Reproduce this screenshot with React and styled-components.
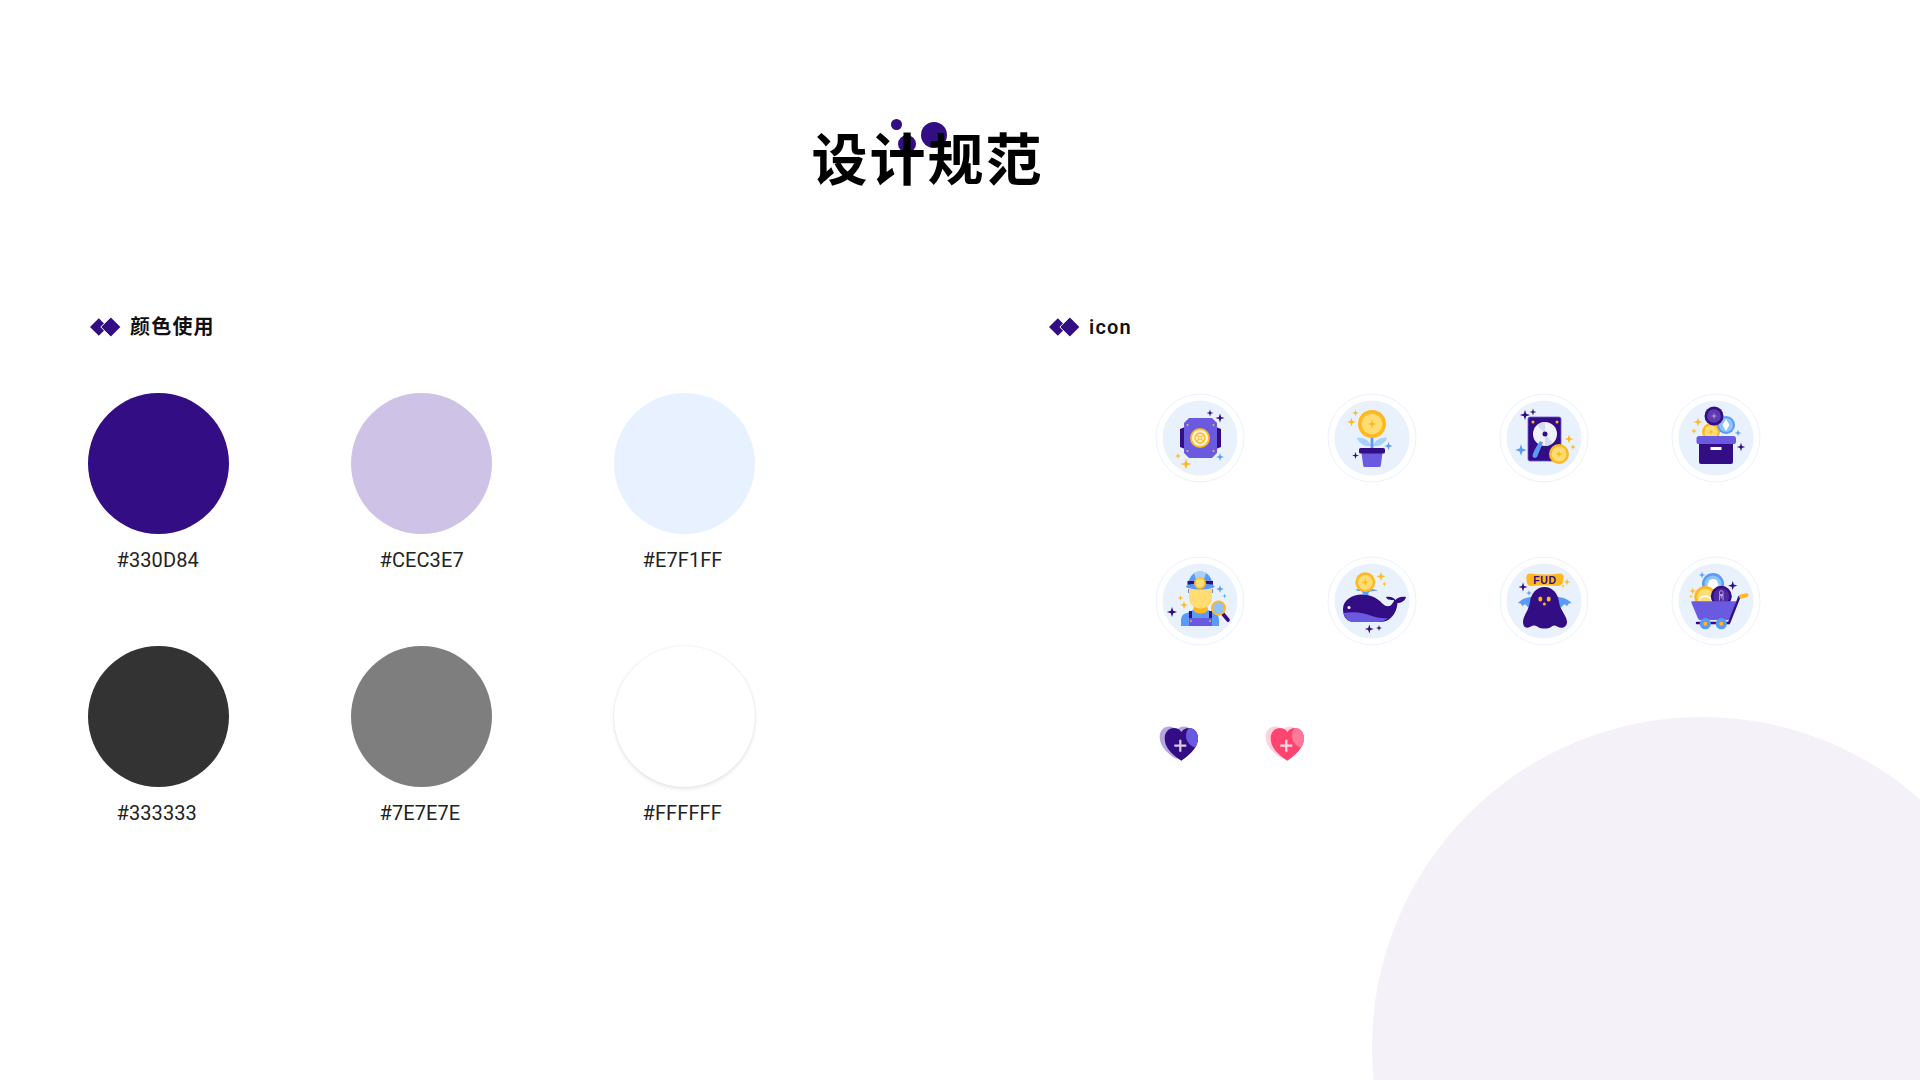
import React from "react";
import styled, { createGlobalStyle } from "styled-components";

const DARK = "#330D84", PURPLE = "#6A5ADF", BLUE = "#5B9BF7", SKY = "#A9D2FB", COINBLUE = "#8CC4FB", GOLD = "#FFB81F", PALE = "#FFDD73";

const Global = createGlobalStyle`
  html, body { margin: 0; padding: 0; background: #fff; }
  body { font-family: "Roboto", "Noto Sans CJK SC", sans-serif; }
`;

const Page = styled.div`
  position: relative; width: 1920px; height: 1080px; overflow: hidden; background: #fff;
`;
const Backdrop = styled.div`
  position: absolute; right: -112px; bottom: -297px; width: 660px; height: 660px;
  border-radius: 50%; background: #F4F1F9;
`;
const Header = styled.header`
  position: relative; height: 313px; box-sizing: border-box; padding: 116px 65px 0 0;
  display: flex; justify-content: center; align-items: flex-start;
`;
const Title = styled.h1`
  position: relative; margin: 0; color: #000;
  font: 700 56px/80px "Noto Sans CJK SC", sans-serif; letter-spacing: 2px;
`;
const TitleText = styled.span` position: relative; `;
const Dot = styled.i`
  position: absolute; left: ${p => p.$x}px; top: ${p => p.$y}px;
  width: ${p => p.$size}px; height: ${p => p.$size}px; border-radius: 50%; background: ${DARK};
`;
const Main = styled.main`
  position: relative; display: grid; grid-template-columns: 959px 1fr; padding-left: 89px;
`;
const Section = styled.section` display: flex; flex-direction: column; align-items: flex-start; `;
const Heading = styled.h2`
  margin: 0; height: 28px; display: flex; align-items: center; gap: 9px; color: #111;
  font: 600 20px/28px "Roboto", "Noto Sans CJK SC", sans-serif; letter-spacing: 1.2px;
`;
const Swatches = styled.div`
  margin: 52px 0 0 -1px; display: grid; grid-template-columns: repeat(3, 141px); column-gap: 122px; row-gap: 74px;
`;
const Swatch = styled.figure` margin: 0; display: flex; flex-direction: column; `;
const Disc = styled.div`
  width: 141px; height: 141px; border-radius: 50%; background: ${p => p.$color};
  box-shadow: ${p => p.$outlined ? "0 2px 4px rgba(0,0,0,.09), 0 0 2px rgba(0,0,0,.1)" : "none"};
`;
const Label = styled.figcaption`
  margin-top: 14px; padding-left: 28.5px; color: #222; font: 400 20px/24px "Roboto", sans-serif; letter-spacing: .1px;
`;
const IconGrid = styled.div`
  margin: 52px 0 0 107px; display: grid; grid-template-columns: repeat(4, 90px); column-gap: 82px; row-gap: 73px;
`;
const IconSvg = styled.svg` display: block; width: 90px; height: 90px; `;
const Hearts = styled.div` margin: 78px 0 0 110px; display: flex; gap: 62px; `;
const HeartSvg = styled.svg` display: block; width: 44px; height: 44px; `;
const BadgeText = styled.text`
  font: 700 10.5px "Liberation Sans", sans-serif; fill: ${DARK}; text-anchor: middle; letter-spacing: .7px;
`;

const Sparkle = ({ x, y, s: size, c }) => {
  const s = size * 1.15, k = s * 0.24;
  return (
    <path fill={c} d={`M${x},${y - s}L${x + k},${y - k}L${x + s},${y}L${x + k},${y + k}L${x},${y + s}L${x - k},${y + k}L${x - s},${y}L${x - k},${y - k}Z`} />
  );
};
const Coin = ({ x, y, r, inner = PALE, outer = GOLD, star = GOLD, s }) => (
  <g>
    <circle cx={x} cy={y} r={r} fill={outer} />
    <circle cx={x} cy={y} r={r * 0.74} fill={inner} />
    {star && <Sparkle x={x} y={y} s={s ?? r * 0.36} c={star} />}
  </g>
);
const Base = ({ children }) => (
  <IconSvg viewBox="-45 -45 90 90">
    <circle r="44" fill="#fff" stroke="#EBF2FD" strokeWidth="1" />
    <circle r="37.5" fill="#E9F1FD" />
    {children}
  </IconSvg>
);

const Miner = () => (
  <Base>
    <path fill={DARK} d="M-15,-11L-20,-9V9L-15,11ZM16,-11L21,-9V9L16,11Z" />
    <path fill={PURPLE} d="M-11,-20H12L17,-15V15L12,20H-11L-16,15V-15Z" />
    {[[-12.5, -13], [13.5, -13], [-12.5, 13], [13.5, 13]].map(([x, y]) => <circle key={x + "" + y} cx={x} cy={y} r="1" fill={GOLD} />)}
    <circle r="10" fill={GOLD} />
    <circle r="8" fill="#FFF6DC" />
    <circle r="5" fill="#FFF0C4" stroke={GOLD} strokeWidth="1.3" />
    <path stroke={GOLD} strokeWidth="1.1" d="M-3.4,-3.4L3.4,3.4M3.4,-3.4L-3.4,3.4" />
    <circle r="1.5" fill="#FFF6DC" stroke={GOLD} strokeWidth=".7" />
    <Sparkle x={20} y={-20} s={4} c={DARK} />
    <Sparkle x={10} y={-25} s={3} c={DARK} />
    <Sparkle x={20} y={19} s={3.4} c={BLUE} />
    <Sparkle x={-22} y={18} s={2.6} c={GOLD} />
    <Sparkle x={-14} y={26} s={4.8} c={GOLD} />
  </Base>
);
const Plant = () => (
  <Base>
    <path fill={SKY} d="M-1,8C-8,9 -13,5 -15,0C-8,-1 -3,2 -1,8ZM1,8C8,9 13,5 15,0C8,-1 3,2 1,8Z" />
    <rect x="-1.4" y="-2" width="2.8" height="13" fill={BLUE} />
    <Coin x={0} y={-14} r={14} s={4} />
    <path fill={PURPLE} d="M-10.5,15H10.5L8.8,27.5Q8.6,29 7,29H-7Q-8.6,29 -8.8,27.5Z" />
    <rect x="-13" y="10" width="26" height="5.6" rx="1.6" fill={DARK} />
    <Sparkle x={-20.5} y={-16} s={4} c={GOLD} />
    <Sparkle x={-16.5} y={-25} s={3} c={GOLD} />
    <Sparkle x={16.5} y={8} s={3.6} c={BLUE} />
    <Sparkle x={-16.5} y={17.5} s={3} c={DARK} />
  </Base>
);
const Drive = () => (
  <Base>
    <rect x="-16" y="-21" width="33" height="44" rx="2" fill={DARK} stroke={PURPLE} strokeWidth=".8" />
    <circle cx="1" cy="-4" r="12" fill="#F1F3FB" />
    <path fill="#D5DAF0" d="M1,-4L-7,-13A12,12 0 0 1 1,-16ZM1,-4L9,5A12,12 0 0 1 1,8Z" />
    <circle cx="1" cy="-4" r="2.5" fill={DARK} />
    <circle cx="-11" cy="-16" r="1.5" fill={GOLD} />
    <circle cx="13" cy="-16" r="1.5" fill={GOLD} />
    <path fill={BLUE} d="M-4,3L-1,4.5L-7,19Q-10,21 -11.5,18.5Q-12,15 -4,3Z" />
    <Coin x={15} y={16} r={10} s={3.2} />
    <Sparkle x={-19} y={-23} s={4.4} c={DARK} />
    <Sparkle x={-11} y={-26} s={3} c={DARK} />
    <Sparkle x={25} y={1} s={4} c={GOLD} />
    <Sparkle x={29} y={9} s={2.4} c={GOLD} />
    <Sparkle x={-23} y={12} s={5} c={BLUE} />
  </Base>
);
const Box = () => (
  <Base>
    <Coin x={-5} y={-6} r={9} s={2.6} />
    <circle cx="10" cy="-13" r="9" fill={BLUE} />
    <circle cx="10" cy="-13" r="7" fill={COINBLUE} />
    <path fill="#fff" d="M10,-19L13.5,-13L10,-7L6.5,-13Z" />
    <circle cx="-2" cy="-22" r="9.5" fill={DARK} />
    <circle cx="-2" cy="-22" r="6.8" fill="#5E3CB0" />
    <Sparkle x={-2} y={-22} s={2.8} c="#A893E0" />
    <rect x="-17" y="4" width="34" height="22" rx="2" fill={DARK} />
    <rect x="-19.5" y="-2" width="39.5" height="8" rx="2.6" fill={PURPLE} />
    <rect x="-5.5" y="9" width="11" height="3" rx=".6" fill="#fff" />
    <Sparkle x={-18} y={-16} s={4} c={GOLD} />
    <Sparkle x={-22} y={-7} s={2.5} c={GOLD} />
    <Sparkle x={22} y={-5} s={3} c={BLUE} />
    <Sparkle x={25} y={9} s={3.6} c={DARK} />
  </Base>
);
const Worker = () => (
  <Base>
    <path fill={DARK} d="M-11.5,-12H-9V-8H-11.5ZM10,-12H12.5V-8H10Z" />
    <path fill={BLUE} d="M-19,25V19Q-19,13 -13,12L-7,9H8L14,12Q19,13 19,19V25Z" />
    <ellipse cx="0.5" cy="8" rx="7.5" ry="4.6" fill={GOLD} />
    <path fill={PALE} d="M-11,-12H12V-3C12,4 6,7.5 .5,7.5C-5,7.5 -11,4 -11,-3Z" />
    <path fill={DARK} d="M-11,10H-8V18H-11ZM9,10H12V18H9Z" />
    <rect x="-11" y="17" width="23" height="8" fill={PURPLE} />
    <circle cx="-9" cy="20" r=".9" fill={GOLD} />
    <circle cx="10" cy="20" r=".9" fill={GOLD} />
    <path fill={BLUE} d="M-12.5,-13C-12.5,-23 -7,-29.5 0.3,-29.5C7.5,-29.5 13,-23 13,-13Z" />
    <path fill={SKY} d="M-6,-28Q0,-31.5 6,-28L4,-22H-4Z" />
    <rect x="-12.5" y="-20" width="25.5" height="3.6" fill={DARK} />
    <ellipse cx="0.3" cy="-14.5" rx="14.4" ry="2.9" fill={BLUE} />
    <Coin x={0} y={-18} r={6} star={null} />
    <path stroke={DARK} strokeWidth="3.6" strokeLinecap="round" d="M23,13L28,19" />
    <circle cx="18.5" cy="7" r="6.6" fill={COINBLUE} stroke={GOLD} strokeWidth="1.9" />
    <Sparkle x={20} y={-12} s={3.4} c={BLUE} />
    <Sparkle x={24.5} y={-5} s={2} c={BLUE} />
    <Sparkle x={-19.5} y={-3} s={2.4} c={GOLD} />
    <Sparkle x={-16} y={4} s={3.4} c={GOLD} />
    <Sparkle x={-28} y={11} s={4.4} c={DARK} />
  </Base>
);
const Whale = () => (
  <Base>
    <path fill={DARK} d="M-29,8C-29,-1 -20,-6.5 -10,-6.5C1,-6.5 7,-1 11,3C14,6 18,6 20,3C22,1 22,-1 22,-1C18,-1 15,-1 14,-4C19,-5 22,-3 23.5,-1C25,-3 29,-5 34,-4C33,0 29,2 25.5,2C25,10 20,21 8,21L-18,21C-25,21 -29,16 -29,8Z" />
    <path fill={PURPLE} d="M-28.5,12C-18,10 -8,12 0,15C6,17 12,17.5 16,17C12,20 9,21 6,21L-18,21C-24,21 -27,17 -28.5,12Z" />
    <circle cx="-23" cy="6.5" r="1.5" fill="#fff" />
    <path fill={BLUE} d="M-9.5,-6C-8.5,-8 -10,-10 -12,-10C-13.5,-10 -15,-10.5 -17,-11C-13,-12.5 -10,-12.5 -7,-11.5C-4,-12.5 0,-12.5 6,-10.5C3,-10 0,-10 -2,-9.5C-3.5,-9 -4,-7.5 -3.5,-6Z" />
    <Coin x={-6.7} y={-18.7} r={10} s={3.2} />
    <Sparkle x={9} y={-24.7} s={4} c={GOLD} />
    <Sparkle x={12.3} y={-17} s={2.2} c={GOLD} />
    <Sparkle x={-2.7} y={28} s={4} c={DARK} />
    <Sparkle x={7} y={27} s={2.6} c={DARK} />
  </Base>
);
const Ghost = () => (
  <Base>
    <path fill={BLUE} d="M-12,-4C-17,-4 -23,-2 -26,2C-23.5,2 -22.5,3 -21.5,5.5C-20,3 -19,3 -17,5C-16,6.5 -15,7.5 -13,6.5ZM13,-4C18,-4 24,-2 27.5,2C25,2 24,3 23,5.5C21.5,3 20.5,3 18.5,5C17.5,6.5 16,7.5 14,6.5Z" />
    <path fill={DARK} d="M0.5,-14C9,-14 14,-7 15,1C16,9 23,15 23,21C23,26 18,28 14,26C11,24 9,24 7,26C4,28 -3,28 -6,26C-9,24 -11,24 -14,26C-18,28 -21,26 -21,21C-21,15 -15,9 -14,1C-13,-7 -8,-14 0.5,-14Z" />
    <ellipse cx="-3.7" cy="-2" rx="2" ry="2.5" fill={GOLD} />
    <ellipse cx="4.7" cy="-2" rx="2" ry="2.5" fill={GOLD} />
    <circle cx="0.4" cy="3" r="1.5" fill={GOLD} />
    <path fill={GOLD} d="M-14,-27.5Q1,-25.5 16,-27.5Q19.5,-27.5 19.5,-24Q20,-20 18,-17Q16,-14.5 12,-15Q1,-16.5 -12,-15Q-16,-14.5 -17,-18Q-18,-22 -17.5,-24.5Q-17,-27.5 -14,-27.5Z" />
    <BadgeText x="1" y="-17.2">FUD</BadgeText>
    <Sparkle x={-21} y={-14} s={4} c={DARK} />
    <Sparkle x={-15} y={-8} s={2.6} c={BLUE} />
    <Sparkle x={23} y={-19} s={3} c={GOLD} />
    <Sparkle x={19} y={-15} s={1.6} c={GOLD} />
  </Base>
);
const Cart = () => (
  <Base>
    <circle cx="-3" cy="-17" r="11" fill={BLUE} />
    <circle cx="-3" cy="-17" r="8.6" fill={COINBLUE} />
    <path fill="#fff" d="M-3,-22C0,-22 1.5,-20.5 1.5,-18.5C3,-17 3,-14 1,-12H-7C-9,-14 -9,-17 -7.5,-18.5C-7.5,-20.5 -6,-22 -3,-22Z" />
    <Coin x={-10.7} y={-4} r={11} star={null} />
    <path fill="none" stroke="#fff" strokeWidth="1.4" d="M-17,0A6.5,6.5 0 0 1 -4.5,0" />
    <circle cx="5.3" cy="-4.7" r="10.5" fill={DARK} />
    <circle cx="5.3" cy="-4.7" r="8" fill="#4D2A9E" />
    <path fill="none" stroke="#CDBCEF" strokeWidth=".8" d="M3.5,-8.5a1.8,1.8 0 0 1 3.6,0V-6.5H3.5ZM3.5,-5.5H7.1V-.5M3.5,-5.5V-.5M5.3,-5.5V-2.5" />
    <path fill={PURPLE} d="M-24.7,1.5Q-25,0.3 -23.5,0.3H19Q20.5,0.3 20,1.5L14,17.5Q13,19 12,19H-16Q-17,19 -18,17.5Z" />
    <path fill="none" stroke={DARK} strokeWidth="2.4" strokeLinecap="round" d="M-19,22H13L23.3,-4" />
    <path fill="none" stroke={GOLD} strokeWidth="4" strokeLinecap="round" d="M25,-4.5L30.5,-5.8" />
    <circle cx="-10.7" cy="22.7" r="5.6" fill={BLUE} />
    <circle cx="-10.7" cy="22.7" r="2" fill={GOLD} />
    <circle cx="5.3" cy="22.7" r="5.6" fill={BLUE} />
    <circle cx="5.3" cy="22.7" r="2" fill={GOLD} />
    <Sparkle x={16.7} y={-15.3} s={4} c={DARK} />
    <Sparkle x={-14} y={-26} s={3} c={BLUE} />
    <Sparkle x={-23.3} y={-10} s={3} c={GOLD} />
    <Sparkle x={-25} y={-4.7} s={1.6} c={GOLD} />
  </Base>
);

const HEART = "M23.3,36.7C12,29 6.7,23 6.7,14C6.7,8 11,4 16,4C19,4 22,5.5 23.3,8C25,5.5 28,4 31,4C36,4 40,8 40,14C40,23 34,29 23.3,36.7Z";
const Heart = ({ id, back, front, spot }) => (
  <HeartSvg viewBox="0 0 44 44">
    <defs><clipPath id={id}><path d={HEART} /></clipPath></defs>
    <path d={HEART} fill={back} transform="translate(-5,-1.6)" />
    <path d={HEART} fill={front} />
    <circle cx="40" cy="11.7" r="12" fill={spot} clipPath={`url(#${id})`} />
    <path stroke="#fff" strokeOpacity=".8" strokeWidth="2.2" d="M16.3,21.7H28.3M22.3,15.7V27.7" />
  </HeartSvg>
);

const colors = ["#330D84", "#CEC3E7", "#E7F1FF", "#333333", "#7E7E7E", "#FFFFFF"];
const icons = [Miner, Plant, Drive, Box, Worker, Whale, Ghost, Cart];

const Mark = () => (
  <svg width="32" height="20" viewBox="0 0 32 20">
    <path fill={DARK} d="M9.8,1.2L18.6,10L9.8,18.8L1,10Z" />
    <path fill={DARK} stroke="#fff" strokeWidth="1" d="M21.8,0L31.8,10L21.8,20L11.8,10Z" />
  </svg>
);

export default function App() {
  return (
    <Page>
      <Global />
      <Backdrop />
      <Header>
        <Title>
          <Dot $x={79} $y={3} $size={11} />
          <Dot $x={86} $y={19} $size={18} />
          <Dot $x={109} $y={6} $size={26} />
          <TitleText>设计规范</TitleText>
        </Title>
      </Header>
      <Main>
        <Section>
          <Heading><Mark />颜色使用</Heading>
          <Swatches>
            {colors.map(c => (
              <Swatch key={c}>
                <Disc $color={c} $outlined={c === "#FFFFFF"} />
                <Label>{c}</Label>
              </Swatch>
            ))}
          </Swatches>
        </Section>
        <Section>
          <Heading><Mark />icon</Heading>
          <IconGrid>
            {icons.map((I, i) => <I key={i} />)}
          </IconGrid>
          <Hearts>
            <Heart id="heart-a" back="#B5A8DC" front={DARK} spot={PURPLE} />
            <Heart id="heart-b" back="#FFD3DE" front="#FF4470" spot="#FF7A98" />
          </Hearts>
        </Section>
      </Main>
    </Page>
  );
}
